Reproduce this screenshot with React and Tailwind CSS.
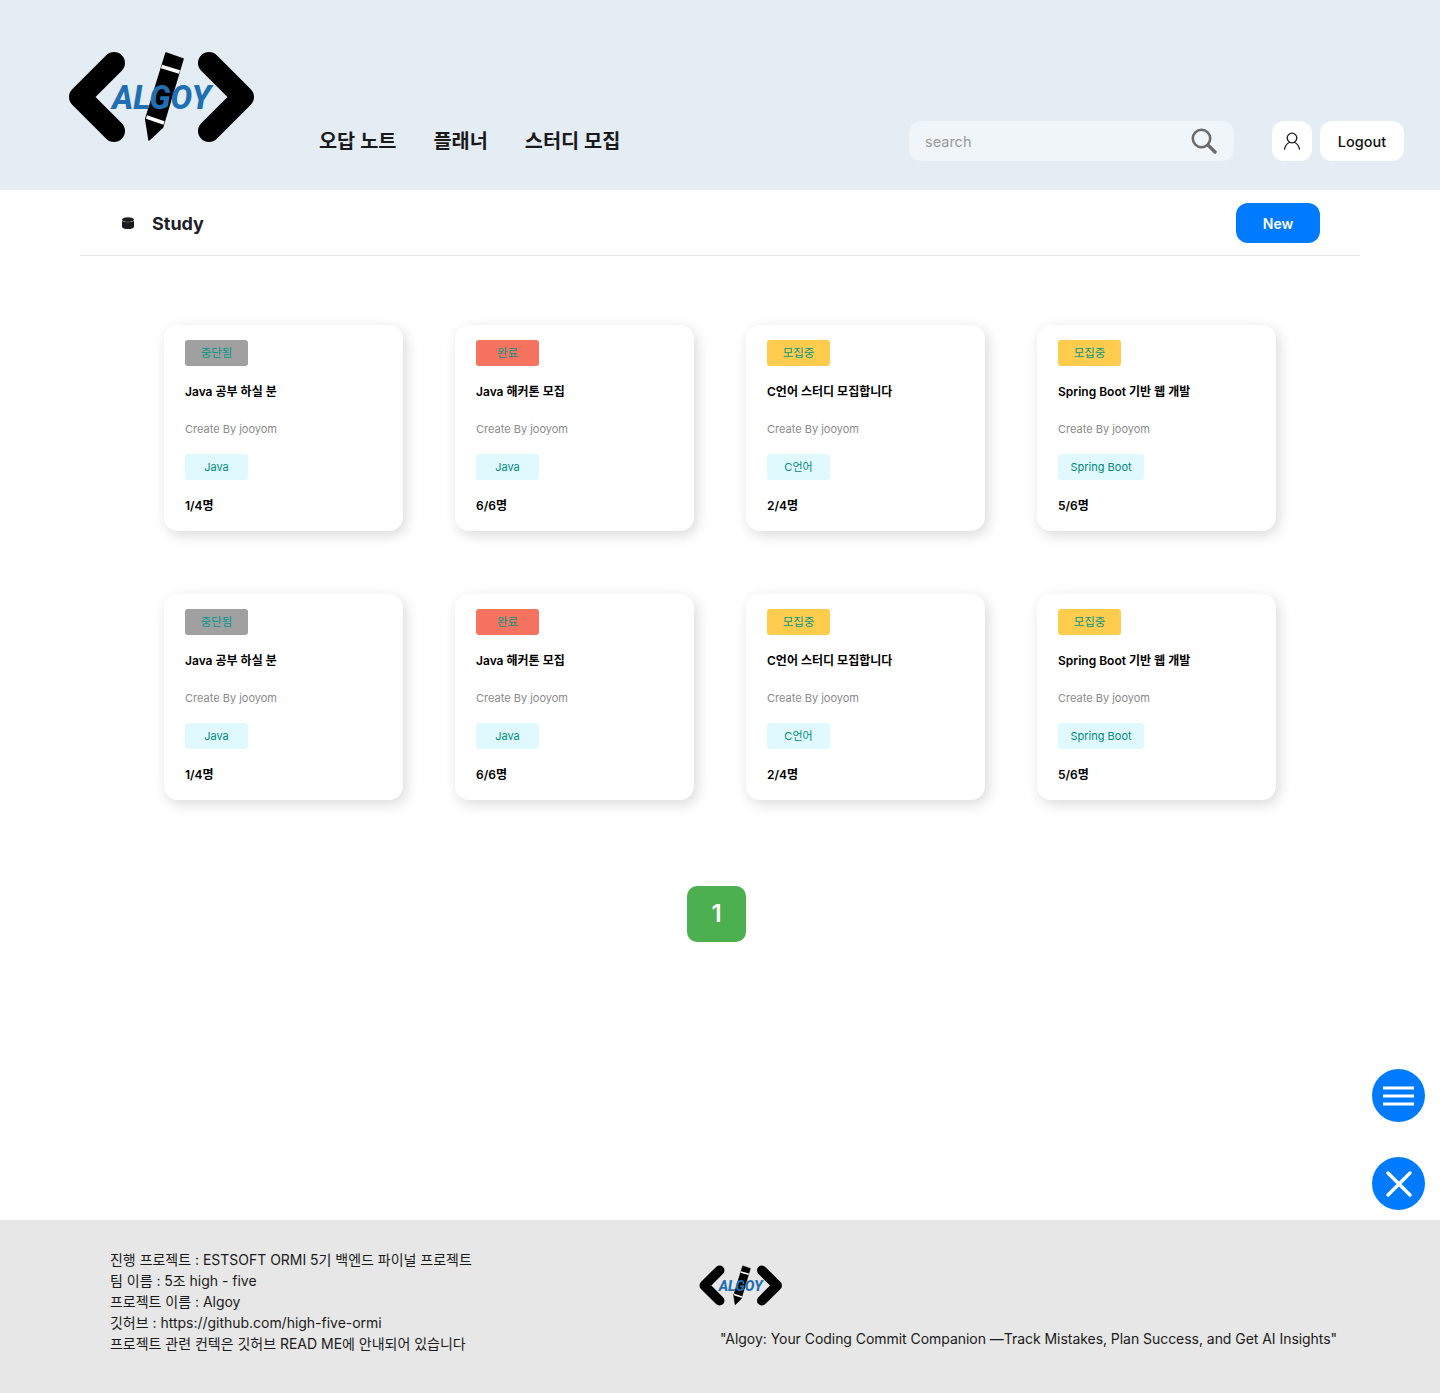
import React from 'react';

const FONT = "font-['Inter','Noto_Sans_CJK_KR',sans-serif]";

const cards = [
  { status: '중단됨', statusColor: 'bg-[#a0a0a0]', title: 'Java 공부 하실 분', tag: 'Java', count: '1/4명' },
  { status: '완료', statusColor: 'bg-[#f6735f]', title: 'Java 해커톤 모집', tag: 'Java', count: '6/6명' },
  { status: '모집중', statusColor: 'bg-[#ffcc4d]', title: 'C언어 스터디 모집합니다', tag: 'C언어', count: '2/4명' },
  { status: '모집중', statusColor: 'bg-[#ffcc4d]', title: 'Spring Boot 기반 웹 개발', tag: 'Spring Boot', count: '5/6명' },
];

const footerLines = [
  '진행 프로젝트 : ESTSOFT ORMI 5기 백엔드 파이널 프로젝트',
  '팀 이름 : 5조 high - five',
  '프로젝트 이름 : Algoy',
  '깃허브 : https://github.com/high-five-ormi',
  '프로젝트 관련 컨텍은 깃허브 READ ME에 안내되어 있습니다',
];

function Logo({ className }) {
  return (
    <svg viewBox="0 0 186 92" className={className}>
      <g fill="none" stroke="#000" strokeWidth="22" strokeLinecap="round" strokeLinejoin="round">
        <polyline points="46,12 12,46 46,80" />
        <polyline points="141,12 175,46 141,80" />
      </g>
      <path d="M98 2 L115 8 L94.5 76.5 L81 89 L77.7 68 Z" fill="#000" stroke="#000" strokeWidth="1.5" strokeLinejoin="round" />
      <path d="M93.5 15.5 L111.5 21 M78.5 66 L96 72" stroke="#fff" strokeWidth="3.5" />
      <text x="44" y="58" fontFamily="Roboto, sans-serif" fontSize="33" fontWeight="800" fontStyle="italic" fill="#1f6fb2" textLength="99" lengthAdjust="spacingAndGlyphs">ALGOY</text>
    </svg>
  );
}

function StudyCard({ card }) {
  return (
    <div className="flex h-[206px] flex-col gap-3 rounded-[14px] bg-white pb-[13px] pl-[21px] pt-[15px] shadow-[3px_4px_14px_rgba(0,0,0,0.15)]">
      <span className={`flex h-[26px] w-[63px] items-center justify-center rounded-[3px] pt-0.5 text-[11.5px] text-[#009688] ${card.statusColor}`}>{card.status}</span>
      <p className="flex h-[26px] items-center pt-0.5 text-xs font-semibold text-black">{card.title}</p>
      <p className="flex h-[26px] items-center text-[11px] text-[#8a8a8a]">Create By jooyom</p>
      <span className="flex h-[26px] min-w-[63px] items-center justify-center self-start rounded-[3px] bg-[#e0f9fe] px-[12.5px] text-[11px] text-[#00897b]">{card.tag}</span>
      <p className="flex h-[26px] items-center pt-0.5 text-xs font-semibold text-black">{card.count}</p>
    </div>
  );
}

export default function App() {
  return (
    <div className={`relative h-[1393px] w-full overflow-hidden bg-white ${FONT}`}>
      {/* Header */}
      <header className="flex h-[190px] items-end bg-[#e4ecf4] pb-[29px] pl-[68px] pr-9">
        <Logo className="mb-[18px] h-[92px] w-[186px] shrink-0" />
        <nav className="ml-[65px] flex h-10 items-center gap-[37px] pt-0.5 text-[19.7px] font-semibold text-[#1a1a1a]">
          <span>오답 노트</span>
          <span>플래너</span>
          <span>스터디 모집</span>
        </nav>
        <div className="ml-auto flex h-10 w-[325px] items-center justify-between rounded-xl bg-[#f0f5f9] pl-[16px] pr-[17px]">
          <span className="pt-0.5 text-[14.5px] text-[#9a9a9a]">search</span>
          <svg viewBox="0 0 26 26" className="h-[26px] w-[26px]" fill="none" stroke="#6b6b6b" strokeLinecap="round">
            <circle cx="10.5" cy="10.5" r="8.7" strokeWidth="2.6" />
            <path d="M17 17 L24 24" strokeWidth="3.4" />
          </svg>
        </div>
        <div className="ml-[38px] flex h-10 w-10 items-center justify-center rounded-xl bg-white">
          <svg viewBox="0 0 18 18" className="h-[18px] w-[18px]" fill="none" stroke="#1a1a1a" strokeWidth="1.3" strokeLinecap="round">
            <circle cx="9" cy="6" r="4.8" />
            <path d="M1.5 17 C2.5 13 5 11 6.5 10.5 M16.5 17 C15.5 13 13 11 11.5 10.5" />
          </svg>
        </div>
        <div className="ml-2 flex h-10 w-[84px] items-center justify-center rounded-xl bg-white pt-0.5 text-[14.5px] font-medium text-[#111]">Logout</div>
      </header>

      <main className="h-[1030px]">
        {/* Title bar */}
        <div className="mx-20 flex h-[66px] items-center justify-between border-b border-[#e4e4e4] pl-[42px] pr-10 pt-[1px]">
          <div className="flex items-center gap-[18px]">
            <svg viewBox="0 0 12 12" className="h-3 w-3" fill="#1b1b22">
              <ellipse cx="6" cy="2.6" rx="6" ry="2.4" />
              <path d="M0 3.8 C1 5.6 11 5.6 12 3.8 L12 9.4 C12 11.2 9 12 6 12 C3 12 0 11.2 0 9.4 Z" />
            </svg>
            <span className="pt-0.5 text-lg font-bold text-[#1f2028]">Study</span>
          </div>
          <button className="h-10 w-[84px] rounded-xl bg-[#007bff] pt-0.5 text-sm font-semibold text-white">New</button>
        </div>

        {/* Cards */}
        <div className="mt-[69px] grid grid-cols-[repeat(4,239px)] gap-x-[52px] gap-y-[63px] pl-[164px]">
          {[...cards, ...cards].map((card, i) => (
            <StudyCard key={i} card={card} />
          ))}
        </div>

        {/* Pagination */}
        <div className="ml-[687px] mt-[86px] flex h-14 w-[59px] items-center justify-center rounded-[10px] bg-[#4caf50] text-2xl font-semibold text-white">1</div>
      </main>

      {/* Floating buttons */}
      <button className="absolute left-[1372px] top-[1069px] flex h-[53px] w-[53px] items-center justify-center rounded-full bg-[#007bff]">
        <svg viewBox="0 0 31 20" className="h-5 w-[31px]" stroke="#fff" strokeWidth="3">
          <path d="M0 2 H31 M0 10 H31 M0 18 H31" />
        </svg>
      </button>
      <button className="absolute left-[1372px] top-[1157px] flex h-[53px] w-[53px] items-center justify-center rounded-full bg-[#007bff]">
        <svg viewBox="0 0 26 26" className="h-[26px] w-[26px]" stroke="#fff" strokeWidth="3.4" strokeLinecap="round">
          <path d="M2 2 L24 24 M24 2 L2 24" />
        </svg>
      </button>

      {/* Footer */}
      <footer className="flex h-[173px] bg-[#e7e7e7] pl-[110px] pt-[29px] text-sm leading-[21px] text-[#1a1a1a]">
        <div className="w-[589px] shrink-0 tracking-[-0.02px]">
          {footerLines.map((line) => (
            <p key={line}>{line}</p>
          ))}
        </div>
        <div className="pt-[16px]">
          <Logo className="h-[41px] w-[83px]" />
          <p className="ml-[21px] mt-[22px] whitespace-nowrap tracking-[-0.045px]">"Algoy: Your Coding Commit Companion —Track Mistakes, Plan Success, and Get AI Insights"</p>
        </div>
      </footer>
    </div>
  );
}
